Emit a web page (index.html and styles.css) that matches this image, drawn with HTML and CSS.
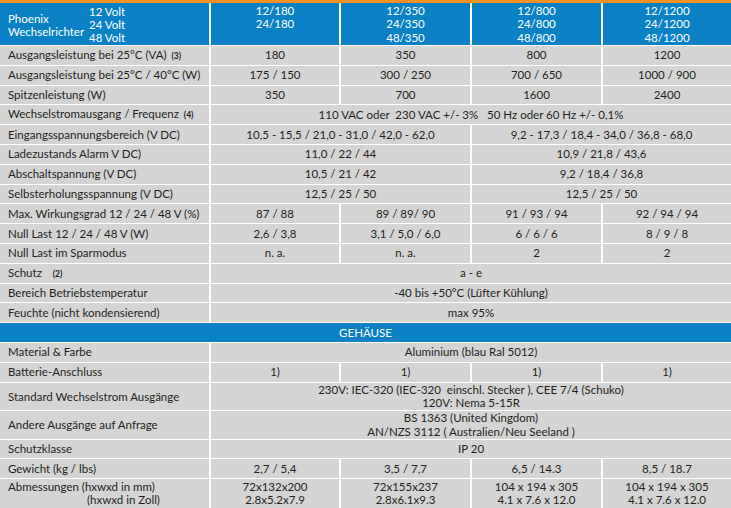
FILE: index.html
```html
<!DOCTYPE html>
<html lang="de">
<head>
<meta charset="utf-8">
<title>Phoenix Wechselrichter</title>
<link rel="stylesheet" href="styles.css">
</head>
<body>
<div class="topbar"></div>
<table class="spec">
<colgroup>
<col class="c0"><col class="c1"><col class="c2"><col class="c3"><col class="c4">
</colgroup>
<thead>
<tr class="head">
<th class="model">
<div class="model-in">
<div class="name">Phoenix<br>Wechselrichter</div>
<div class="volts">12 Volt<br>24 Volt<br>48 Volt</div>
</div>
</th>
<th>12/180<br>24/180</th>
<th>12/350<br>24/350<br>48/350</th>
<th>12/800<br>24/800<br>48/800</th>
<th>12/1200<br>24/1200<br>48/1200</th>
</tr>
</thead>
<tbody>
<tr><td class="lbl">Ausgangsleistung bei 25°C (VA) <span class="fn">(3)</span></td><td>180</td><td>350</td><td>800</td><td>1200</td></tr>
<tr><td class="lbl">Ausgangsleistung bei 25°C / 40°C (W)</td><td>175 / 150</td><td>300 / 250</td><td>700 / 650</td><td>1000 / 900</td></tr>
<tr><td class="lbl">Spitzenleistung (W)</td><td>350</td><td>700</td><td>1600</td><td>2400</td></tr>
<tr><td class="lbl">Wechselstromausgang / Frequenz <span class="fn">(4)</span></td><td colspan="4">110 VAC oder &nbsp;230 VAC +/- 3% &nbsp;&nbsp;50 Hz oder 60 Hz +/- 0,1%</td></tr>
<tr><td class="lbl">Eingangsspannungsbereich (V DC)</td><td colspan="2">10,5 - 15,5 / 21,0 - 31,0 / 42,0 - 62,0</td><td colspan="2">9,2 - 17,3 / 18,4 - 34,0 / 36,8 - 68,0</td></tr>
<tr><td class="lbl">Ladezustands Alarm V DC)</td><td colspan="2">11,0 / 22 / 44</td><td colspan="2">10,9 / 21,8 / 43,6</td></tr>
<tr><td class="lbl">Abschaltspannung (V DC)</td><td colspan="2">10,5 / 21 / 42</td><td colspan="2">9,2 / 18,4 / 36,8</td></tr>
<tr><td class="lbl">Selbsterholungsspannung (V DC)</td><td colspan="2">12,5 / 25 / 50</td><td colspan="2">12,5 / 25 / 50</td></tr>
<tr><td class="lbl">Max. Wirkungsgrad 12 / 24 / 48 V (%)</td><td>87 / 88</td><td>89 / 89/ 90</td><td>91 / 93 / 94</td><td>92 / 94 / 94</td></tr>
<tr><td class="lbl">Null Last 12 / 24 / 48 V (W)</td><td>2,6 / 3,8</td><td>3,1 / 5,0 / 6,0</td><td>6 / 6 / 6</td><td>8 / 9 / 8</td></tr>
<tr><td class="lbl">Null Last im Sparmodus</td><td>n. a.</td><td>n. a.</td><td>2</td><td>2</td></tr>
<tr><td class="lbl">Schutz &nbsp;&nbsp;<span class="fn">(2)</span></td><td colspan="4">a - e</td></tr>
<tr><td class="lbl">Bereich Betriebstemperatur</td><td colspan="4">-40 bis +50°C (Lüfter Kühlung)</td></tr>
<tr><td class="lbl">Feuchte (nicht kondensierend)</td><td colspan="4">max 95%</td></tr>
<tr class="section"><td colspan="5">GEHÄUSE</td></tr>
<tr><td class="lbl">Material &amp; Farbe</td><td colspan="4">Aluminium (blau Ral 5012)</td></tr>
<tr><td class="lbl">Batterie-Anschluss</td><td>1)</td><td>1)</td><td>1)</td><td>1)</td></tr>
<tr class="two"><td class="lbl">Standard Wechselstrom Ausgänge</td><td colspan="4">230V: IEC-320 (IEC-320 &nbsp;einschl. Stecker ), CEE 7/4 (Schuko)<br>120V: Nema 5-15R</td></tr>
<tr class="two"><td class="lbl">Andere Ausgänge auf Anfrage</td><td colspan="4">BS 1363 (United Kingdom)<br>AN/NZS 3112 ( Australien/Neu Seeland )</td></tr>
<tr><td class="lbl">Schutzklasse</td><td colspan="4">IP 20</td></tr>
<tr><td class="lbl">Gewicht (kg / lbs)</td><td>2,7 / 5,4</td><td>3,5 / 7,7</td><td>6,5 / 14.3</td><td>8,5 / 18.7</td></tr>
<tr class="two last"><td class="lbl">Abmessungen (hxwxd in mm)<br><span class="indent">(hxwxd in Zoll)</span></td><td>72x132x200<br>2.8x5.2x7.9</td><td>72x155x237<br>2.8x6.1x9.3</td><td>104 x 194 x 305<br>4.1 x 7.6 x 12.0</td><td>104 x 194 x 305<br>4.1 x 7.6 x 12.0</td></tr>
</tbody>
</table>
</body>
</html>
```

FILE: styles.css
```css
html, body {
  margin: 0;
  padding: 0;
  background: #ffffff;
}

body {
  font-family: Lato, "Open Sans", "Liberation Sans", sans-serif;
  font-size: 11.5px;
  color: #231f20;
  width: 731px;
  height: 508px;
  overflow: hidden;
}

.topbar {
  height: 3px;
  background: #f29226;
}

.spec {
  width: 731px;
  table-layout: fixed;
  border-collapse: separate;
  border-spacing: 0;
}

.c0 { width: 211px; }
.c1 { width: 130px; }
.c2 { width: 131px; }
.c3 { width: 131px; }
.c4 { width: 128px; }

.spec th,
.spec td {
  box-sizing: border-box;
  padding: 0;
  text-align: center;
  vertical-align: middle;
  border-right: 2px solid #ffffff;
  border-bottom: 1px solid #ffffff;
  background: #d4d4d4;
  line-height: 14px;
  white-space: nowrap;
  font-weight: normal;
}

.spec th:last-child,
.spec td:last-child {
  border-right: 0;
}

.spec td {
  height: 19.8px;
}

.spec .head th {
  background: #0a80c5;
  color: #ffffff;
  height: 43px;
  vertical-align: top;
  padding-top: 1px;
  line-height: 13.3px;
}

.spec .head th.model {
  text-align: left;
  padding-top: 0;
  vertical-align: middle;
}

.model-in {
  display: flex;
  align-items: center;
  padding-left: 8px;
}

.name {
  width: 81px;
  line-height: 13.5px;
  padding-top: 3px;
}

.volts {
  line-height: 13.3px;
  padding-top: 1px;
}

.spec td.lbl {
  text-align: left;
  padding-left: 8px;
}

.fn {
  font-size: 8.5px;
  font-weight: bold;
  margin-left: 2px;
}

.indent {
  padding-left: 79px;
}

.spec .section td {
  background: #0a80c5;
  color: #ffffff;
  border-right: 0;
}

.spec .two td {
  height: 28.5px;
  line-height: 13.5px;
}

.spec .last td {
  border-bottom: 0;
}
```
